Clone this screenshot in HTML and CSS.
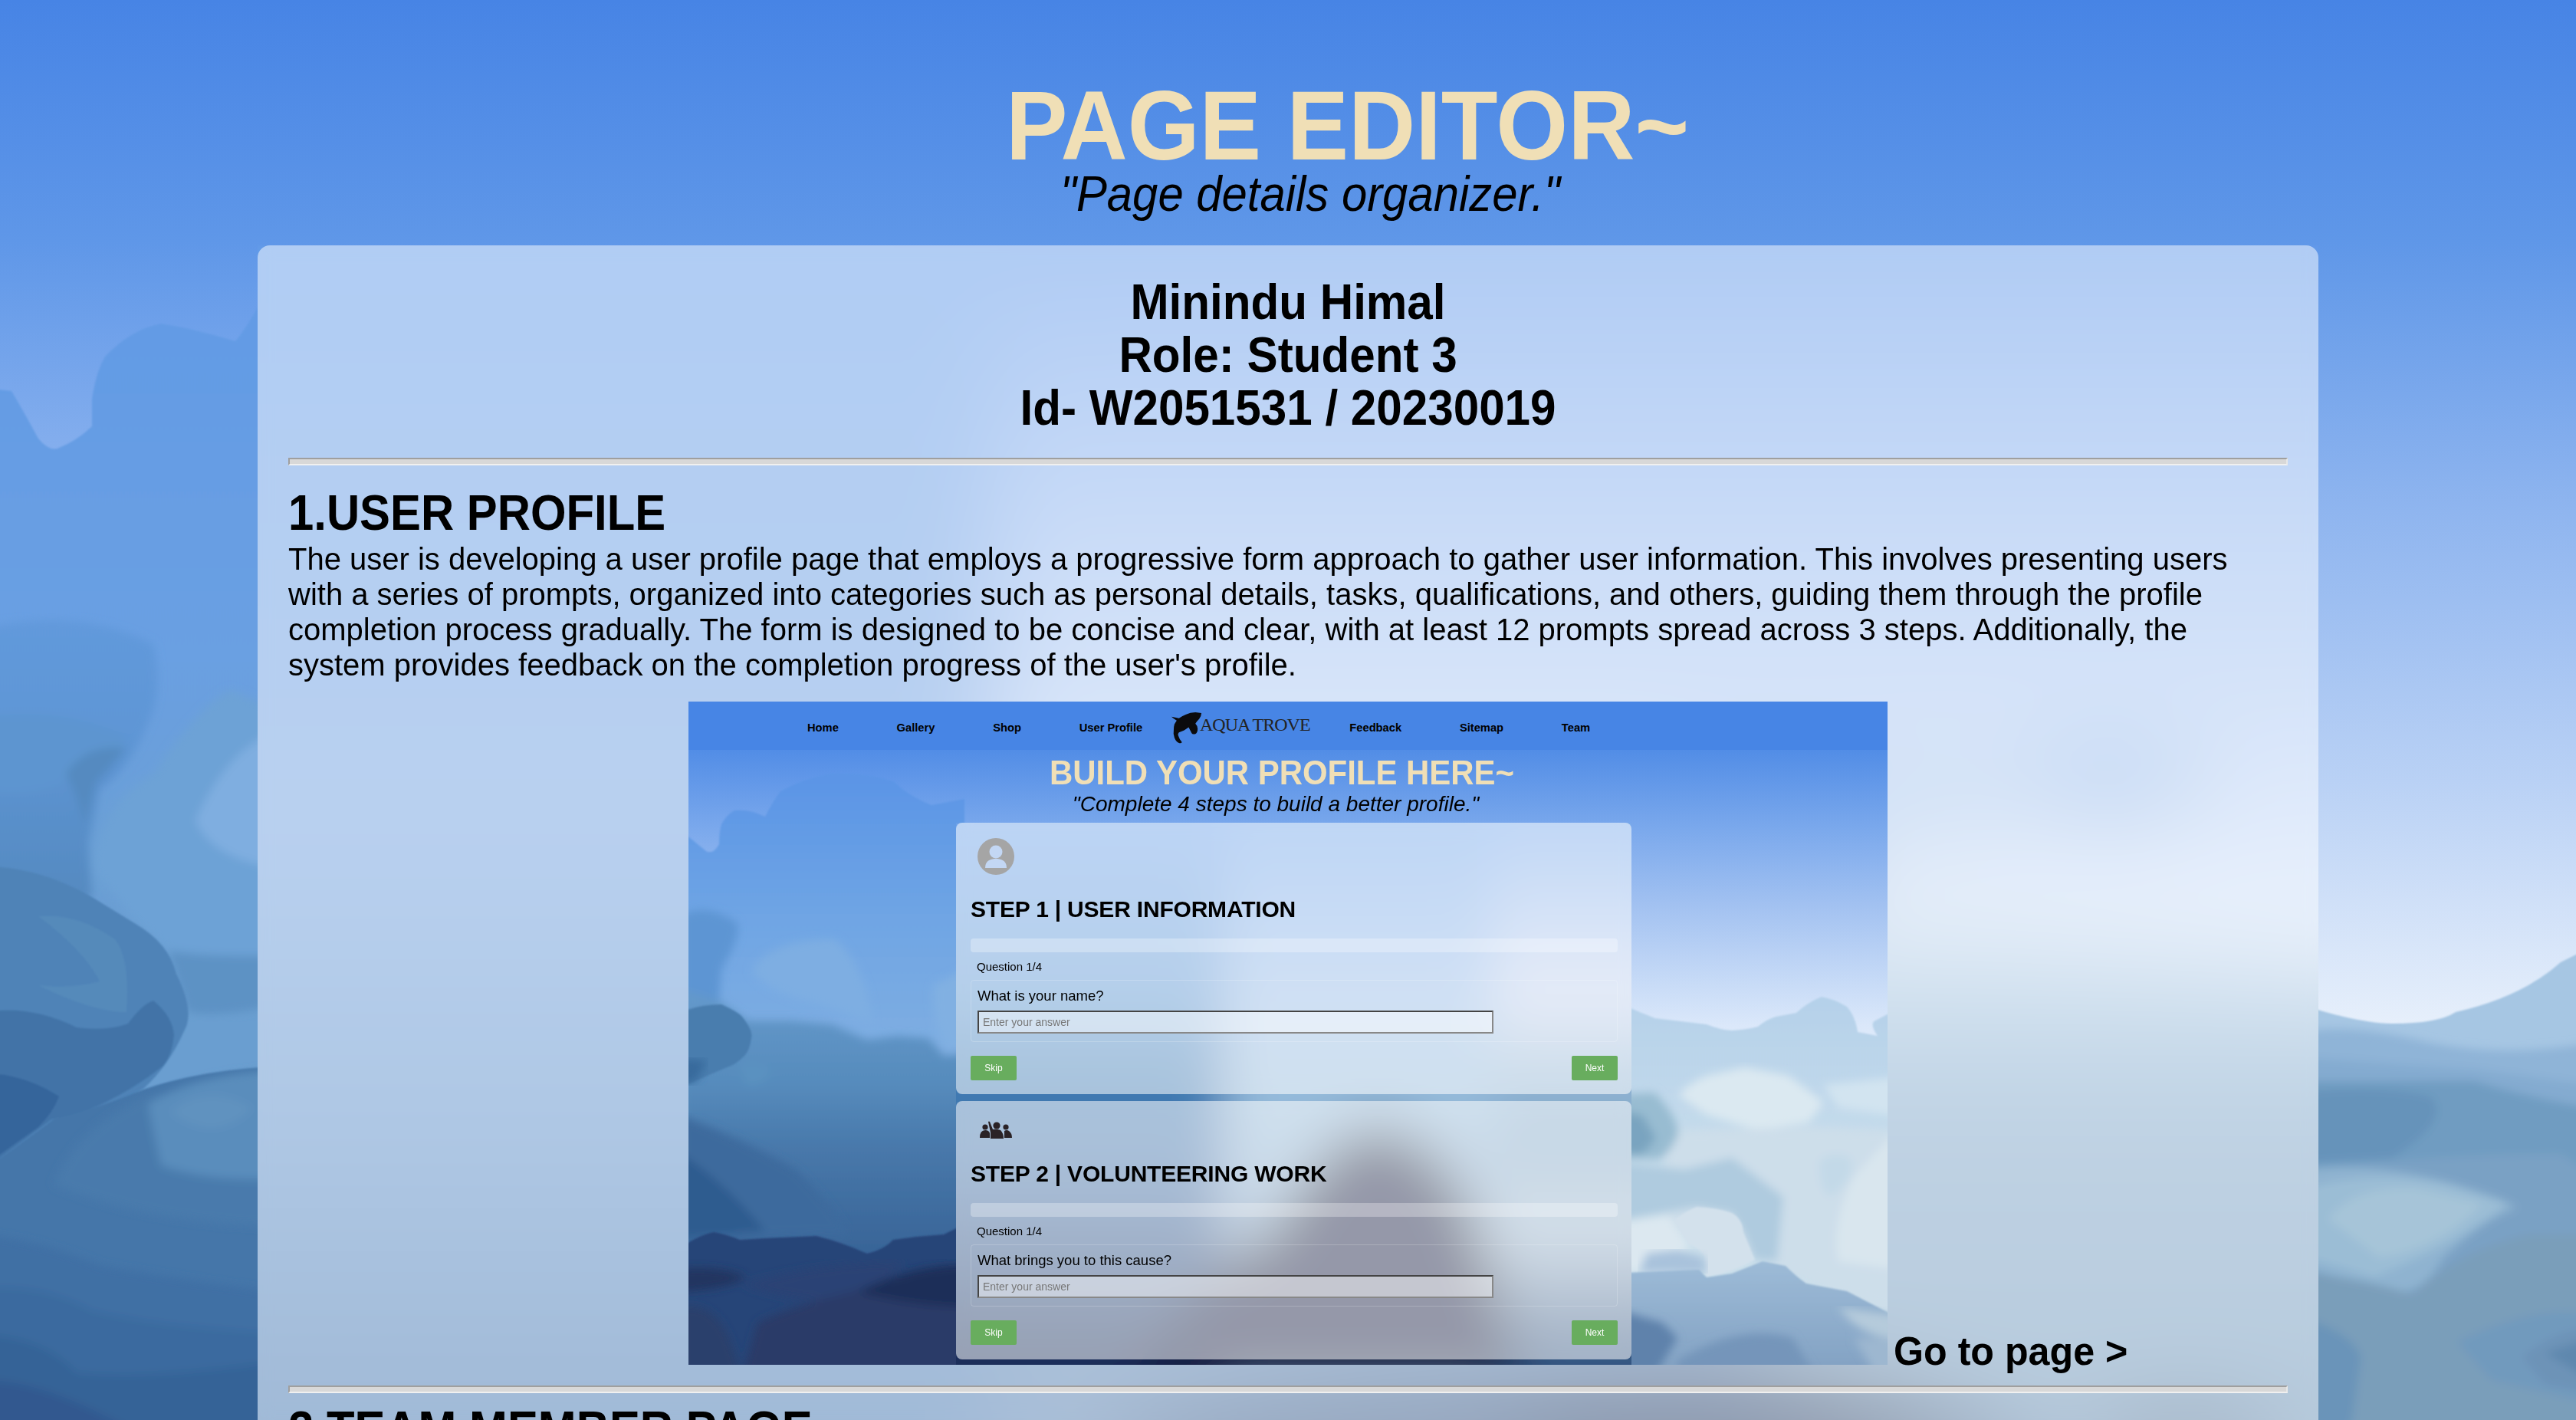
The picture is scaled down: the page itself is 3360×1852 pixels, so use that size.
FILE: index.html
```html
<!DOCTYPE html>
<html lang="en">
<head>
    <meta charset="UTF-8">
    <meta name="viewport" content="width=device-width, initial-scale=1.0">
    <title>Page Editor</title>
    <link rel="stylesheet" href="styles.css">
</head>
<body>
    <!-- Page background -->
    <svg class="page-bg" viewBox="0 0 3360 1852" preserveAspectRatio="none" aria-hidden="true">
        <defs>
            <linearGradient id="sky" gradientUnits="userSpaceOnUse" x1="0" y1="0" x2="0" y2="1852">
                <stop offset="0" stop-color="#4784e5"/>
                <stop offset="0.17" stop-color="#5f97e8"/>
                <stop offset="0.36" stop-color="#8fb5ef"/>
                <stop offset="0.55" stop-color="#b9d1f5"/>
                <stop offset="0.72" stop-color="#e6effb"/>
                <stop offset="1" stop-color="#f0f5fc"/>
            </linearGradient>
            <linearGradient id="hillLeft" gradientUnits="userSpaceOnUse" x1="0" y1="400" x2="0" y2="1300">
                <stop offset="0" stop-color="#639be5"/>
                <stop offset="0.5" stop-color="#6aa0e2"/>
                <stop offset="0.8" stop-color="#6a9fd5"/>
                <stop offset="1" stop-color="#6a9ed0"/>
            </linearGradient>
            <linearGradient id="hillShade" gradientUnits="userSpaceOnUse" x1="0" y1="700" x2="0" y2="1200">
                <stop offset="0" stop-color="#659cdf"/>
                <stop offset="0.5" stop-color="#5e96d6"/>
                <stop offset="1" stop-color="#5488bd"/>
            </linearGradient>
            <linearGradient id="washLeft" gradientUnits="userSpaceOnUse" x1="0" y1="320" x2="0" y2="1852">
                <stop offset="0" stop-color="#619ae8"/>
                <stop offset="0.5" stop-color="#71a1df"/>
                <stop offset="0.77" stop-color="#5b8dc7"/>
                <stop offset="1" stop-color="#4173ad"/>
            </linearGradient>
            <linearGradient id="washHill" gradientUnits="userSpaceOnUse" x1="0" y1="1180" x2="0" y2="1852">
                <stop offset="0" stop-color="#cfe0f0"/>
                <stop offset="0.18" stop-color="#9dc0de"/>
                <stop offset="0.4" stop-color="#7fa5c8"/>
                <stop offset="1" stop-color="#6d95b9"/>
            </linearGradient>
            <filter id="crisp" x="-2%" y="-2%" width="104%" height="104%">
                <feGaussianBlur stdDeviation="1.2"/>
            </filter>
            <filter id="soft" x="-2%" y="-2%" width="104%" height="104%">
                <feGaussianBlur stdDeviation="6"/>
            </filter>
            <filter id="wash" filterUnits="userSpaceOnUse" x="0" y="0" width="3360" height="2200">
                <feGaussianBlur stdDeviation="60"/>
            </filter>
            <clipPath id="cardArea">
                <rect x="336" y="320" width="2688" height="1532"/>
            </clipPath>
            <clipPath id="sideLeft">
                <rect x="0" y="0" width="345" height="1852"/>
            </clipPath>
        </defs>
        <rect width="3360" height="1852" fill="url(#sky)"/>

        <!-- left mountains -->
        <path filter="url(#crisp)" fill="url(#hillLeft)" d="M-20 506 L15 510 Q30 535 50 572 Q65 590 77 584 Q100 575 120 556 L120 520 Q125 485 137 465 Q170 430 210 422 Q260 430 307 445 Q320 430 345 385 L345 1900 L-20 1900Z"/>
        <g clip-path="url(#sideLeft)">
            <g filter="url(#soft)">
                <path fill="url(#hillShade)" d="M-20 820 Q100 790 200 840 Q215 900 190 950 Q170 1000 130 1030 L115 1100 L120 1170 L-20 1200Z"/>
                <path fill="#5d95d0" d="M-20 935 Q80 920 165 960 Q150 990 80 1020 Q40 1040 -20 1030Z"/>
                <path fill="#558ac0" d="M85 1010 Q110 970 165 975 Q145 1000 125 1020 Q115 1060 110 1075 Q95 1020 85 1010Z"/>
                <path fill="#6da2d6" d="M120 1130 Q135 1045 200 1010 Q260 920 300 900 L400 940 L400 1260 L220 1240 L175 1200Z"/>
                <path fill="#7faee0" d="M255 1070 Q290 990 345 960 L400 960 L400 1135 Q280 1130 255 1070Z"/>
                <path fill="#5d92c4" d="M220 1240 Q280 1250 400 1245 L400 1300 Q300 1330 245 1320Z"/>
            </g>
            <g filter="url(#crisp)">
                <path fill="#4f83b7" d="M-20 1130 Q50 1130 120 1170 L177 1205 Q220 1230 230 1270 Q255 1320 240 1345 Q220 1390 187 1420 Q133 1450 67 1470 L-20 1530Z"/>
                <path fill="#558aba" d="M50 1195 Q100 1190 150 1225 Q170 1250 165 1320 Q120 1320 50 1285 Q90 1290 130 1280 Q110 1240 50 1195Z"/>
                <path fill="#4273a7" d="M-20 1320 Q40 1310 100 1340 Q140 1345 167 1335 Q185 1310 200 1305 Q225 1325 227 1350 Q225 1375 213 1390 Q175 1420 133 1440 Q100 1455 67 1460 L-20 1525Z"/>
                <path fill="#36659b" d="M-20 1400 Q30 1400 77 1430 Q70 1450 50 1470 L-20 1520Z"/>
                <path fill="#4576a9" d="M-20 1525 Q30 1490 70 1460 Q130 1445 190 1420 Q280 1390 400 1390 L400 1900 L-20 1900Z"/>
            </g>
            <g filter="url(#soft)">
                <path fill="#487aac" d="M70 1545 Q100 1470 190 1430 L400 1400 L400 1600 Q200 1600 70 1545Z"/>
                <path fill="#5a8dbc" d="M193 1440 Q260 1395 400 1395 L400 1535 Q280 1545 210 1520 Q200 1480 193 1440Z"/>
                <path fill="#6092bf" d="M222 1450 Q270 1410 330 1445 Q280 1495 222 1450Z"/>
                <path fill="#3f70a4" d="M-20 1610 Q60 1620 130 1650 Q240 1670 400 1690 L400 1900 L-20 1900Z"/>
                <path fill="#3a6a9f" d="M-20 1680 Q60 1675 120 1710 Q230 1735 400 1740 L400 1900 L-20 1900Z"/>
                <path fill="#366497" d="M-20 1740 Q60 1745 100 1790 Q200 1800 400 1770 L400 1900 L-20 1900Z"/>
                <path fill="#30598f" d="M-20 1800 Q60 1800 180 1870 L-20 1880Z"/>
            </g>
        </g>

        <!-- right mountains -->
        <path filter="url(#crisp)" fill="#a6c6e3" d="M3010 1313 Q3080 1335 3120 1335 Q3180 1335 3203 1320 Q3290 1300 3340 1255 L3380 1235 L3380 1900 L3010 1900Z"/>
        <g filter="url(#soft)">
            <path fill="#8fb4d7" d="M3010 1345 Q3070 1335 3170 1360 Q3270 1380 3380 1360 L3380 1900 L3010 1900Z"/>
            <path fill="#84abd0" d="M3010 1380 L3230 1395 L3380 1415 L3380 1900 L3010 1900Z"/>
            <path fill="#6f9cc1" d="M3010 1410 L3227 1410 Q3300 1432 3380 1445 L3380 1900 L3010 1900Z"/>
            <path fill="#6693ba" d="M3010 1425 Q3100 1415 3170 1430 Q3200 1460 3120 1510 L3010 1515Z"/>
            <path fill="#7aa1c4" d="M3010 1525 Q3180 1505 3340 1505 L3380 1530 L3380 1900 L3010 1900Z"/>
            <path fill="#8fb3d0" d="M3010 1525 Q3090 1515 3187 1540 Q3260 1560 3283 1575 Q3240 1590 3187 1640 Q3160 1690 3120 1685 L3010 1655Z"/>
            <path fill="#9bbdd5" d="M3010 1550 Q3100 1525 3190 1545 L3270 1570 Q3200 1625 3097 1665 L3010 1640Z"/>
            <path fill="#a6c4d8" d="M3037 1590 Q3070 1545 3153 1550 L3238 1570 Q3180 1630 3103 1640Z"/>
            <path fill="#7a9eba" d="M3010 1660 Q3090 1670 3147 1688 Q3210 1630 3300 1610 L3380 1610 L3380 1900 L3010 1900Z"/>
            <path fill="#719abd" d="M3205 1750 Q3310 1700 3380 1715 L3380 1830 L3250 1800Z"/>
            <path fill="#6d93b7" d="M3290 1770 Q3340 1730 3380 1735 L3380 1815 L3320 1805Z"/>
            <path fill="#5f88ae" d="M3320 1765 L3380 1745 L3380 1800Z"/>
            <path fill="#6b94b9" d="M3010 1720 Q3070 1740 3080 1770 L3067 1860 L3010 1868Z"/>
        </g>

        <!-- what shows through the card -->
        <g clip-path="url(#cardArea)">
            <g filter="url(#wash)">
                <rect x="100" y="100" width="3160" height="2100" fill="url(#sky)"/>
                <path fill="url(#washLeft)" d="M100 100 L1300 100 L1300 1300 L1800 1700 L1800 2200 L100 2200Z"/>
                <rect x="1300" y="1100" width="1100" height="1100" fill="#557fb0"/>
                <ellipse cx="2750" cy="1020" rx="130" ry="60" fill="#8fb6e8"/>
                <path fill="#a5c5ec" d="M2200 950 L2620 980 L2600 1100 L2200 1100Z"/>
                <path fill="url(#washHill)" d="M2300 1180 Q2600 1210 3260 1280 L3260 2200 L2300 2200Z"/>
                <ellipse cx="2050" cy="1920" rx="620" ry="140" fill="#2c4d7e"/>
                <ellipse cx="2250" cy="1900" rx="300" ry="120" fill="#142f5c"/>
                <ellipse cx="2850" cy="1885" rx="130" ry="50" fill="#3a5a80"/>
            </g>
        </g>
    </svg>

    <header class="page-header">
        <h1 class="page-title">PAGE EDITOR~</h1>
        <p class="page-tagline">"Page details organizer."</p>
    </header>

    <main class="card">
        <div class="author">
            <div>Minindu Himal</div>
            <div>Role: Student 3</div>
            <div>Id- W2051531 / 20230019</div>
        </div>
        <hr class="rule">

        <!-- Section 1 -->
        <section class="section">
            <h2 class="section-title">1.USER PROFILE</h2>
            <p class="section-text">The user is developing a user profile page that employs a progressive form approach to gather user information. This involves presenting users with a series of prompts, organized into categories such as personal details, tasks, qualifications, and others, guiding them through the profile completion process gradually. The form is designed to be concise and clear, with at least 12 prompts spread across 3 steps. Additionally, the system provides feedback on the completion progress of the user's profile.</p>
            <div class="preview-row">
                <div class="shot">
                    <svg class="shot-bg" viewBox="0 0 1564 865" preserveAspectRatio="none" aria-hidden="true">
                        <defs>
                            <linearGradient id="shotSky" gradientUnits="userSpaceOnUse" x1="0" y1="0" x2="0" y2="865">
                                <stop offset="0" stop-color="#4785e5"/>
                                <stop offset="0.073" stop-color="#528de6"/>
                                <stop offset="0.19" stop-color="#7aa8ec"/>
                                <stop offset="0.31" stop-color="#a3c2f1"/>
                                <stop offset="0.43" stop-color="#c9dcf7"/>
                                <stop offset="0.49" stop-color="#dbe8fa"/>
                                <stop offset="0.6" stop-color="#e8f0fa"/>
                            </linearGradient>
                            <linearGradient id="shotHill" gradientUnits="userSpaceOnUse" x1="0" y1="100" x2="0" y2="460">
                                <stop offset="0" stop-color="#5b95e6"/>
                                <stop offset="0.5" stop-color="#6fa5e4"/>
                                <stop offset="1" stop-color="#7faee1"/>
                            </linearGradient>
                            <linearGradient id="shotLow" gradientUnits="userSpaceOnUse" x1="0" y1="380" x2="0" y2="720">
                                <stop offset="0" stop-color="#6499cb"/>
                                <stop offset="0.35" stop-color="#568bbc"/>
                                <stop offset="0.6" stop-color="#4878aa"/>
                                <stop offset="1" stop-color="#386497"/>
                            </linearGradient>
                            <linearGradient id="shotRidge" gradientUnits="userSpaceOnUse" x1="0" y1="390" x2="0" y2="640">
                                <stop offset="0" stop-color="#b5d1ea"/>
                                <stop offset="1" stop-color="#cbdfeb"/>
                            </linearGradient>
                            <linearGradient id="shotLowRight" gradientUnits="userSpaceOnUse" x1="0" y1="730" x2="0" y2="865">
                                <stop offset="0" stop-color="#9dbbd7"/>
                                <stop offset="1" stop-color="#84a3c4"/>
                            </linearGradient>
                            <linearGradient id="midLeft" gradientUnits="userSpaceOnUse" x1="0" y1="158" x2="0" y2="865">
                                <stop offset="0" stop-color="#6ba0e9"/>
                                <stop offset="0.32" stop-color="#5b95d1"/>
                                <stop offset="0.47" stop-color="#3e7bb2"/>
                                <stop offset="0.62" stop-color="#4172ab"/>
                                <stop offset="0.9" stop-color="#203c6d"/>
                                <stop offset="1" stop-color="#1c2c55"/>
                            </linearGradient>
                            <linearGradient id="midCentre" gradientUnits="userSpaceOnUse" x1="0" y1="158" x2="0" y2="865">
                                <stop offset="0" stop-color="#6fa4e9"/>
                                <stop offset="0.32" stop-color="#97bbe7"/>
                                <stop offset="0.5" stop-color="#95bbda"/>
                                <stop offset="1" stop-color="#7d9cc0"/>
                            </linearGradient>
                            <linearGradient id="midRight" gradientUnits="userSpaceOnUse" x1="0" y1="158" x2="0" y2="865">
                                <stop offset="0" stop-color="#73a6ea"/>
                                <stop offset="0.32" stop-color="#c9d6f0"/>
                                <stop offset="0.47" stop-color="#8fb3d2"/>
                                <stop offset="0.6" stop-color="#7fa5c6"/>
                                <stop offset="0.75" stop-color="#a2bbd1"/>
                                <stop offset="0.96" stop-color="#335581"/>
                            </linearGradient>
                            <filter id="shotCrisp" x="-2%" y="-2%" width="104%" height="104%">
                                <feGaussianBlur stdDeviation="1"/>
                            </filter>
                            <filter id="shotSoft" x="-2%" y="-2%" width="104%" height="104%">
                                <feGaussianBlur stdDeviation="6"/>
                            </filter>
                            <filter id="shotWash" filterUnits="userSpaceOnUse" x="200" y="0" width="1200" height="1000">
                                <feGaussianBlur stdDeviation="32"/>
                            </filter>
                            <clipPath id="shotMiddle">
                                <rect x="349" y="158" width="881" height="707"/>
                            </clipPath>
                            <clipPath id="shotLeftSide">
                                <rect x="0" y="0" width="352" height="865"/>
                            </clipPath>
                            <clipPath id="shotRightSide">
                                <rect x="1226" y="0" width="338" height="865"/>
                            </clipPath>
                        </defs>
                        <rect width="1564" height="865" fill="url(#shotSky)"/>

                        <!-- hills left of the cards -->
                        <path filter="url(#shotCrisp)" fill="url(#shotHill)" d="M-10 168 L23 195 Q32 200 40 186 Q40 170 43 160 Q50 147 60 142 Q80 140 100 150 Q110 130 120 117 Q150 100 187 94 Q230 92 267 104 Q290 125 317 135 L360 127 L360 880 L-10 880Z"/>
                        <g clip-path="url(#shotLeftSide)">
                            <g filter="url(#shotSoft)">
                                <path fill="#5d95d3" d="M-10 280 Q20 260 63 288 Q70 305 43 349 L40 390 L-10 380Z"/>
                                <path fill="#7eaee2" d="M82 350 Q110 310 190 310 Q230 340 240 420 L170 395 Q100 380 82 350Z"/>
                                <path fill="#81b0e2" d="M320 370 L380 340 L380 455 L335 452 Q315 410 320 370Z"/>
                                <path fill="url(#shotLow)" d="M-10 375 L40 390 L77 416 L133 416 L187 421 L233 441 L273 436 L313 439 L333 462 L380 457 L380 880 L-10 880Z"/>
                                <path fill="#5a91c0" d="M65 475 Q90 465 110 482 Q95 505 75 500Z"/>
                            </g>
                            <path filter="url(#shotCrisp)" fill="#4a7dae" d="M-10 405 Q15 395 43 395 Q65 405 70 411 Q85 430 82 439 Q80 455 73 462 Q60 475 50 477 L-10 503Z"/>
                            <path filter="url(#shotSoft)" fill="#386a9c" d="M-10 465 L25 468 L10 495 L-10 500Z"/>
                            <g filter="url(#shotSoft)">
                                <path fill="#3d6a9d" d="M-10 540 Q70 570 140 610 Q190 660 210 695 L-10 700Z"/>
                                <path fill="#2f5c8f" d="M-10 590 Q40 620 100 690 L-10 700Z"/>
                            </g>
                            <path filter="url(#shotCrisp)" fill="#284478" d="M-10 712 Q15 695 33 692 Q50 695 67 702 L100 700 L167 697 Q200 705 233 720 Q255 715 267 702 Q300 697 333 695 L380 672 L380 880 L-10 880Z"/>
                            <g filter="url(#shotSoft)">
                                <path fill="#213660" d="M-10 740 Q40 735 75 750 Q60 765 -10 770Z"/>
                                <path fill="#2a4375" d="M70 760 Q180 730 280 730 L240 780 Q150 790 70 760Z"/>
                                <path fill="#2c3f6c" d="M-10 790 Q40 780 60 850 L70 880 L-10 880Z"/>
                                <path fill="#2a3b67" d="M70 880 L90 810 Q170 770 380 740 L380 880Z"/>
                                <path fill="#1f2f58" d="M220 770 Q300 730 380 735 L380 790 Q300 790 220 770Z"/>
                            </g>
                        </g>

                        <!-- clouds right of the cards -->
                        <path filter="url(#shotCrisp)" fill="url(#shotRidge)" d="M1220 396 Q1240 405 1261 413 L1328 421 Q1345 428 1361 429 Q1380 428 1395 424 Q1405 415 1418 411 L1445 406 Q1460 392 1478 385 Q1495 388 1511 398 Q1522 410 1525 431 L1551 436 Q1540 420 1548 416 L1575 402 L1575 880 L1220 880Z"/>
                        <g clip-path="url(#shotRightSide)">
                            <g filter="url(#shotSoft)">
                                <path fill="#d2e4f0" d="M1480 500 L1575 490 L1575 540 L1500 530Z"/>
                                <path fill="#dbe9f1" d="M1291 513 Q1310 495 1328 488 L1378 477 L1435 488 L1481 523 L1461 549 L1395 559 L1328 539Z"/>
                                <path fill="#cddeea" d="M1275 560 L1460 555 L1575 560 L1575 800 L1400 730 L1275 680Z"/>
                                <path fill="#c3d9e8" d="M1475 600 Q1490 585 1515 595 Q1525 620 1490 645 Q1475 640 1475 600Z"/>
                                <path fill="#d9e6ee" d="M1520 620 L1575 560 L1575 740 L1500 730 Q1490 680 1520 620Z"/>
                                <path fill="#afcbdf" d="M1200 600 L1300 610 L1361 595 L1428 646 L1420 730 L1391 728 L1376 692 L1361 667 L1315 659 L1200 680Z"/>
                                <path fill="#98bcd1" d="M1200 513 L1260 510 Q1290 540 1291 564 Q1280 590 1265 597 L1200 595Z"/>
                                <path fill="#7aa4c0" d="M1200 530 L1245 540 L1262 570 L1245 590 L1200 590Z"/>
                                <path fill="#dce8f0" d="M1200 680 L1278 670 L1305 708 L1285 740 L1200 745Z"/>
                            </g>
                            <path filter="url(#shotCrisp)" fill="#d3e1ec" d="M1285 677 Q1300 665 1315 659 Q1340 660 1361 667 Q1375 675 1376 692 L1391 728 Q1360 745 1328 751 Q1325 735 1325 723 Q1315 710 1305 708Z"/>
                            <path filter="url(#shotSoft)" fill="#a9c2dc" d="M1250 720 L1290 715 L1325 725 L1328 745 L1240 745Z"/>
                            <path filter="url(#shotCrisp)" fill="url(#shotLowRight)" d="M1220 745 L1318 741 L1328 751 L1361 746 L1401 730 L1431 736 Q1445 750 1458 759 L1511 769 L1575 802 L1575 880 L1220 880Z"/>
                            <g filter="url(#shotSoft)">
                                <path fill="#b5cbdb" d="M1500 790 L1575 800 L1575 830 Q1530 830 1500 790Z"/>
                                <path fill="#9db7d0" d="M1520 830 L1575 830 L1575 880 L1550 880Z"/>
                                <path fill="#5f82ab" d="M1200 790 L1270 810 L1290 830 L1260 880 L1200 880Z"/>
                                <path fill="#7595ba" d="M1290 860 Q1370 810 1440 830 L1470 880 L1290 880Z"/>
                            </g>
                        </g>

                        <!-- what shows through the cards -->
                        <g clip-path="url(#shotMiddle)">
                            <g filter="url(#shotWash)">
                                <rect x="250" y="100" width="450" height="900" fill="url(#midLeft)"/>
                                <rect x="700" y="100" width="350" height="900" fill="url(#midCentre)"/>
                                <rect x="1050" y="100" width="300" height="900" fill="url(#midRight)"/>
                                <path fill="#141c42" d="M860 560 Q930 530 1000 610 Q1050 680 1090 900 L560 900 Q640 760 760 680 Q810 590 860 560Z"/>
                            </g>
                        </g>
                    </svg>

                    <nav class="shot-nav">
                        <a>Home</a>
                        <a>Gallery</a>
                        <a>Shop</a>
                        <a>User Profile</a>
                        <span class="shot-logo">
                            <svg class="whale" viewBox="0 0 41 43" aria-hidden="true">
                                <path fill="#0b0b0d" d="M0 7 Q5 8 10 9 Q14 6 19 4 Q25 1 32 1 L40 2 Q40 6 37 10 Q34 13 32 16 Q35 19 35 23 Q35 28 32 30 Q28 31 27 29 Q25 25 23 21 Q20 23 17 25 L10 28 Q8 30 9 32 Q11 38 14 41 Q13 43 10 42 Q6 40 4 35 Q2 30 3 25 Q3 20 4 17 L7 12 Q3 10 0 7Z"/>
                            </svg>
                            <span class="shot-logo-text">AQUA TROVE</span>
                        </span>
                        <a>Feedback</a>
                        <a>Sitemap</a>
                        <a>Team</a>
                    </nav>

                    <h3 class="shot-title">BUILD YOUR PROFILE HERE~</h3>
                    <p class="shot-tagline">"Complete 4 steps to build a better profile."</p>

                    <div class="step step-first">
                        <svg class="step-icon" viewBox="0 0 48 48" aria-hidden="true">
                            <circle cx="24" cy="24" r="24" fill="#a5a5a5"/>
                            <circle cx="24" cy="18" r="8.5" fill="#c3d7f4"/>
                            <path fill="#c3d7f4" d="M10 39 Q10 28 22 27 L26 27 Q38 28 38 39Z"/>
                        </svg>
                        <h4 class="step-title">STEP 1 | USER INFORMATION</h4>
                        <div class="step-progress"></div>
                        <div class="step-count">Question 1/4</div>
                        <div class="step-question">
                            <label class="step-label">What is your name?</label>
                            <div class="step-input">Enter your answer</div>
                        </div>
                        <div class="step-actions">
                            <span class="step-btn">Skip</span>
                            <span class="step-btn">Next</span>
                        </div>
                    </div>

                    <div class="step">
                        <svg class="step-icon step-icon-group" viewBox="0 0 44 26" aria-hidden="true">
                            <g fill="#2a2226">
                                <circle cx="8" cy="10" r="3.6"/>
                                <path d="M1 24 Q1 14 8 14 Q13 14 14 18 L14 24Z"/>
                                <circle cx="23" cy="8" r="4.6"/>
                                <path d="M15 25 L15 17 L12 3 Q13 2 14 3 L18 13 Q23 12 28 14 Q32 18 32 25Z"/>
                                <circle cx="35" cy="10" r="3.6"/>
                                <path d="M33 24 L33 15 Q36 13 39 15 Q43 18 43 24Z"/>
                            </g>
                        </svg>
                        <h4 class="step-title">STEP 2 | VOLUNTEERING WORK</h4>
                        <div class="step-progress"></div>
                        <div class="step-count">Question 1/4</div>
                        <div class="step-question">
                            <label class="step-label">What brings you to this cause?</label>
                            <div class="step-input">Enter your answer</div>
                        </div>
                        <div class="step-actions">
                            <span class="step-btn">Skip</span>
                            <span class="step-btn">Next</span>
                        </div>
                    </div>
                </div>
                <a class="goto">Go to page &gt;</a>
            </div>
        </section>
        <hr class="rule rule-second">

        <!-- Section 2 -->
        <section class="section">
            <h2 class="section-title section-title-next">2.TEAM MEMBER PAGE</h2>
        </section>
    </main>
</body>
</html>
```

FILE: styles.css
```css
html, body {
    height: 100%;
    overflow: hidden;
}

body {
    position: relative;
    margin: 0;
    font-family: "Liberation Sans", Arial, sans-serif;
    color: #000;
    background: #4784e5;
}

.page-bg {
    position: absolute;
    top: 0;
    left: 0;
    width: 3360px;
    height: 1852px;
}

.page-header {
    position: relative;
    display: flex;
    flex-direction: column;
    align-items: center;
    box-sizing: border-box;
    height: 320px;
    padding-top: 104px;
}

.page-title {
    margin: 0 0 0 154px;
    font-size: 128px;
    line-height: 120px;
    font-weight: 700;
    transform: scaleX(0.943);
    color: #f0dfb6;
}

.page-tagline {
    margin: 0 0 0 58px;
    font-size: 64px;
    line-height: 58px;
    font-style: italic;
    transform: scaleX(0.935);
}

.card {
    position: relative;
    margin: 0 336px;
    padding: 40px;
    border-radius: 16px;
    background: rgba(255, 255, 255, 0.5);
    backdrop-filter: blur(10px);
}

.author {
    text-align: center;
    font-size: 64px;
    line-height: 69px;
    font-weight: 700;
    transform: scaleX(0.94);
}

.rule {
    height: 6px;
    margin: 30px 0 0;
    border: 2px solid;
    border-color: #9f9f9f #e8e8e8 #f0f0f0 #9f9f9f;
    background: #d8d8d8;
}

.rule-second {
    margin-top: 27px;
}

.section-title {
    width: fit-content;
    margin: 26px 0 0;
    font-size: 64px;
    line-height: 73px;
    font-weight: 700;
    transform: scaleX(0.935);
    transform-origin: left;
}

.section-title-next {
    margin-top: 11px;
}

.section-text {
    margin: 0;
    font-size: 40px;
    line-height: 46px;
}

.preview-row {
    display: grid;
    grid-template-columns: 1fr 1564px 1fr;
    margin-top: 25px;
}

.shot {
    grid-column: 2;
    position: relative;
    height: 865px;
    overflow: hidden;
}

.shot-bg {
    position: absolute;
    top: 0;
    left: 0;
    width: 100%;
    height: 100%;
}

.shot-nav {
    position: relative;
    display: flex;
    align-items: center;
    gap: 75.8px;
    box-sizing: border-box;
    height: 63px;
    padding: 4px 0 0 155px;
    background: #4785e5;
    font-size: 14.7px;
    font-weight: 700;
}

.shot-logo {
    display: flex;
    align-items: center;
    margin: 0 -24px 0 -38px;
}

.whale {
    width: 40px;
    height: 42px;
}

.shot-logo-text {
    margin: -6px 0 0 -3px;
    font-family: "Liberation Serif", serif;
    font-size: 24px;
    font-weight: 400;
    letter-spacing: -1px;
    color: #222;
}

.shot-title {
    position: relative;
    margin: 5px 16px 0 0;
    text-align: center;
    font-size: 44px;
    line-height: 50px;
    font-weight: 700;
    transform: scaleX(0.953);
    color: #f0dfb6;
}

.shot-tagline {
    position: relative;
    margin: -1px 0 0;
    padding-right: 32px;
    text-align: center;
    font-size: 28px;
    line-height: 34px;
    font-style: italic;
}

.step {
    position: relative;
    box-sizing: border-box;
    width: 881px;
    height: 337px;
    margin: 9px 0 0 349px;
    padding: 20px 18px 0 19px;
    border-radius: 8px;
    background: rgba(255, 255, 255, 0.55);
    backdrop-filter: blur(10px);
}

.step-first {
    height: 354px;
    margin-top: 7px;
}

.step-icon {
    display: block;
    width: 48px;
    height: 48px;
    margin-left: 9px;
}

.step-icon-group {
    width: 44px;
    height: 26px;
    margin: 4px 0 0 11px;
}

.step-title {
    margin: 28px 0 0;
    font-size: 30px;
    line-height: 34px;
    font-weight: 700;
    letter-spacing: -0.2px;
}

.step-progress {
    height: 18px;
    margin-top: 21px;
    border-radius: 4px;
    background: rgba(255, 255, 255, 0.3);
}

.step-count {
    margin: 10px 0 0 8px;
    font-size: 15px;
    line-height: 17px;
}

.step-question {
    box-sizing: border-box;
    height: 81px;
    margin-top: 9px;
    padding: 10px 8px 0;
    border: 1px solid rgba(255, 255, 255, 0.2);
    border-radius: 4px;
}

.step-label {
    display: block;
    font-size: 18.5px;
    line-height: 20px;
}

.step-input {
    box-sizing: border-box;
    width: 673px;
    height: 30px;
    margin-top: 9px;
    padding-left: 5px;
    border: 2px solid;
    border-color: #444 #888 #888 #444;
    background: rgba(255, 255, 255, 0.45);
    font-size: 14px;
    line-height: 26px;
    color: #777;
}

.step-actions {
    display: flex;
    justify-content: space-between;
    margin-top: 18px;
}

.step-btn {
    display: block;
    width: 60px;
    height: 32px;
    border-radius: 2px;
    background: #68ad5e;
    color: #fff;
    text-align: center;
    font-size: 12px;
    line-height: 32px;
}

.goto {
    align-self: end;
    margin: 0 0 -12px 8px;
    font-size: 52px;
    line-height: 60px;
    font-weight: 700;
    transform: scaleX(0.965);
    transform-origin: left;
    white-space: nowrap;
}
```
